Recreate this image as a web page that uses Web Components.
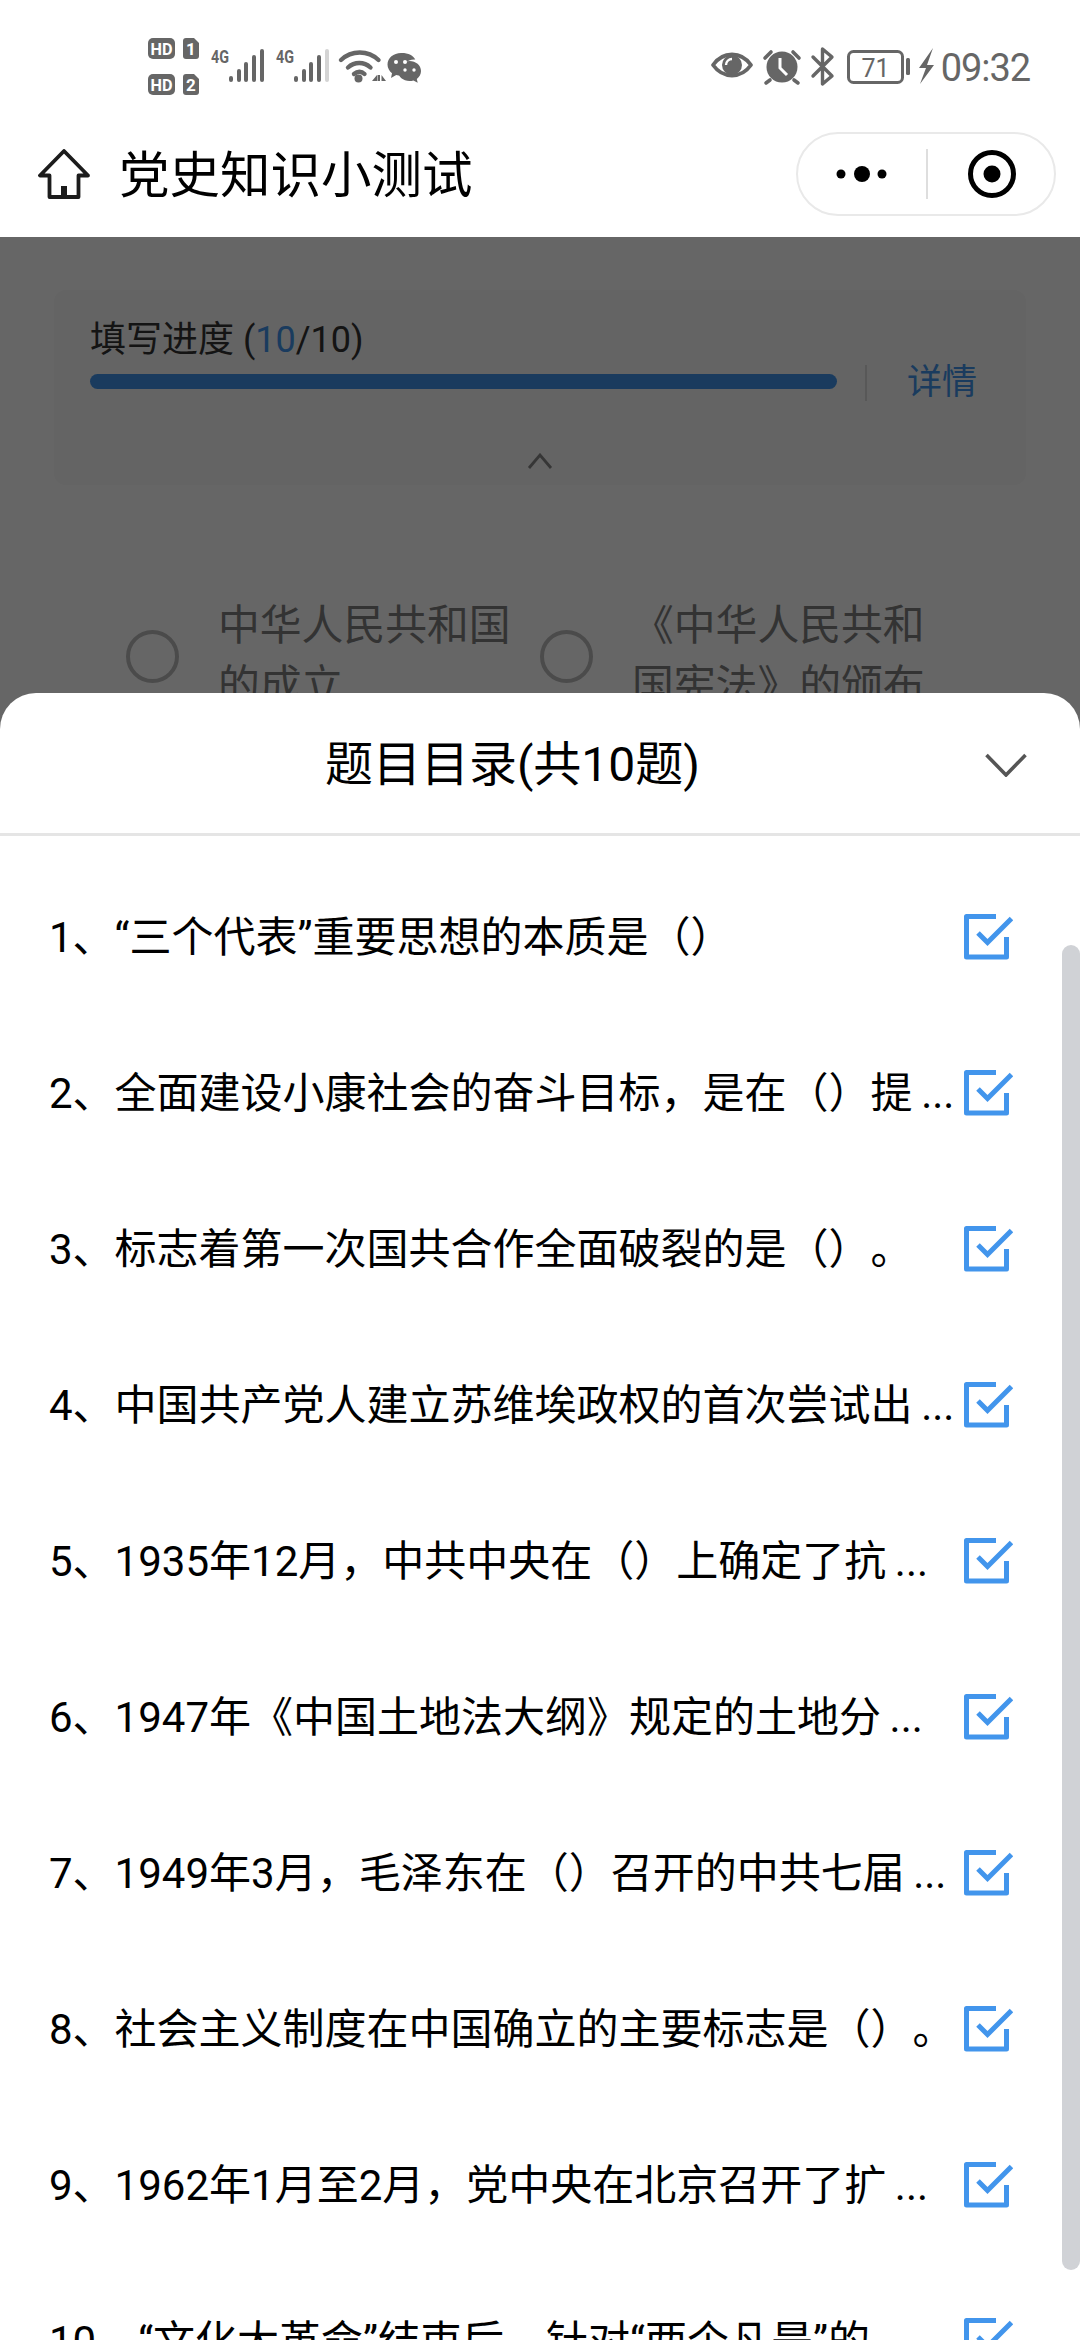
<!DOCTYPE html>
<html lang="zh">
<head>
<meta charset="utf-8">
<title>党史知识小测试</title>
<style>
  html, body { margin: 0; padding: 0; background: #fff; }
  body {
    width: 1080px;
    height: 2340px;
    overflow: hidden;
    position: relative;
    font-family: Roboto, "Noto Sans CJK SC", sans-serif;
    color: #000;
  }
</style>
</head>
<body>
<status-bar></status-bar>
<nav-bar title="党史知识小测试"></nav-bar>
<quiz-body>
  <quiz-progress done="10" total="10"></quiz-progress>
  <quiz-options>
    <quiz-option>中华人民共和国的成立</quiz-option>
    <quiz-option>《中华人民共和国宪法》的颁布</quiz-option>
  </quiz-options>
</quiz-body>
<toc-sheet title="题目目录(共10题)">
  <toc-item>1、“三个代表”重要思想的本质是（）</toc-item>
  <toc-item>2、全面建设小康社会的奋斗目标，是在（）提&#8201;...</toc-item>
  <toc-item>3、标志着第一次国共合作全面破裂的是（）。</toc-item>
  <toc-item>4、中国共产党人建立苏维埃政权的首次尝试出&#8201;...</toc-item>
  <toc-item>5、1935年12月，中共中央在（）上确定了抗&#8201;...</toc-item>
  <toc-item>6、1947年《中国土地法大纲》规定的土地分&#8201;...</toc-item>
  <toc-item>7、1949年3月，毛泽东在（）召开的中共七届&#8201;...</toc-item>
  <toc-item>8、社会主义制度在中国确立的主要标志是（）。</toc-item>
  <toc-item>9、1962年1月至2月，党中央在北京召开了扩&#8201;...</toc-item>
  <toc-item>10、“文化大革命”结束后，针对“两个凡是”的</toc-item>
</toc-sheet>

<script>
const define = (name, html, Base = HTMLElement) => {
  const template = document.createElement('template');
  template.innerHTML = html;
  window.customElements.define(name, class extends Base {
    constructor () {
      super();
      this.attachShadow({ mode: 'open' });
      this.shadowRoot.appendChild(template.content.cloneNode(true));
    }
    connectedCallback () {
      if (this.render) this.render();
    }
  });
};

/* status bar */

const signal = (x, last) => `
  <text x="${x}" y="63" font-size="18" font-weight="700" textLength="18" lengthAdjust="spacingAndGlyphs">4G</text>
  <g>
    <rect x="${x + 18}" y="76" width="4" height="6" rx="2"/>
    <rect x="${x + 26}" y="69" width="4" height="13" rx="2"/>
    <rect x="${x + 33}" y="62" width="4" height="20" rx="2"/>
    <rect x="${x + 41}" y="55" width="4" height="27" rx="2"/>
    <rect x="${x + 49}" y="49" width="4" height="33" rx="2" fill="${last}"/>
  </g>`;

define('status-bar', `
  <style>
    :host {
      display: flex;
      justify-content: space-between;
      align-items: flex-start;
      height: 110px;
      color: #666;
      font-family: Roboto, sans-serif;
    }
    svg { display: block; fill: #666; }
    .left { margin-top: 30px; margin-left: 140px; }
    .right { display: flex; align-items: center; margin-top: 40px; margin-right: 50px; }
    .time { font-size: 38px; letter-spacing: -1.100px; line-height: 50px; margin-left: 1px; position: relative; top: 3px; }
  </style>
  <svg class="left" width="290" height="70" viewBox="140 30 290 70">
    <rect x="148" y="38" width="27" height="21" rx="5"/>
    <path d="M186 38h8l5 5v13a3 3 0 0 1-3 3h-10a3 3 0 0 1-3-3v-15a3 3 0 0 1 3-3z"/>
    <rect x="148" y="74" width="27" height="21" rx="5"/>
    <path d="M186 74h8l5 5v13a3 3 0 0 1-3 3h-10a3 3 0 0 1-3-3v-15a3 3 0 0 1 3-3z"/>
    <g fill="#fff" font-size="17" font-weight="700" text-anchor="middle">
      <text x="161.5" y="54.5" textLength="22" lengthAdjust="spacingAndGlyphs">HD</text>
      <text x="191" y="54.5">1</text>
      <text x="161.5" y="90.5" textLength="22" lengthAdjust="spacingAndGlyphs">HD</text>
      <text x="191" y="90.5">2</text>
    </g>
    ${signal(211, '#666')}
    ${signal(276, '#d4d4d4')}
    <g fill="none" stroke="#666" stroke-width="4.4" stroke-linecap="round">
      <path d="M341 60c10.500-10 27-10 37.500 0"/>
      <path d="M348 67.500c6.500-6 16-6 22.500 0"/>
      <path d="M354 74c3.500-3 7.500-3 10.500 0"/>
    </g>
    <circle cx="358.500" cy="78.500" r="4"/>
    <path d="M372 81l5-6v6zM380 75v6h-2.500v-6zM381.500 75l4.500 6h-4.500z"/>
    <path d="M401 53c-7.500 0-13.500 5-13.500 11.500 0 3.500 1.800 6.500 4.500 8.700l-1 4.800 5.200-3c1.500.4 3 .6 4.800.6.400 0 .9 0 1.300 0-.6-1.500-.9-3-.9-4.600 0-6.500 5.700-11.500 12.800-11.500h1.100c-1.800-3.800-6.800-6.500-13.800-6.500z"/>
    <path d="M421 71c0-5.700-5.200-10-11.500-10s-11.500 4.300-11.500 10 5.200 10 11.500 10c1.400 0 2.700-.2 3.900-.6l4.300 2.400-.9-3.900c2.600-1.900 4.200-4.700 4.200-7.900z"/>
    <g fill="#fff">
      <circle cx="396" cy="62" r="2"/><circle cx="405" cy="62" r="2"/>
      <circle cx="405" cy="70" r="1.700"/><circle cx="414" cy="70" r="1.700"/>
    </g>
  </svg>
  <div class="right">
    <svg width="238" height="50" viewBox="700 40 238 50">
      <path d="M711 65c5-7 11.500-10.500 19-10.500S744 58 749 65c-5 7-11.500 10.500-19 10.500S716 72 711 65z" fill="none" stroke="#666" stroke-width="3.800" stroke-linejoin="round"/>
      <circle cx="730" cy="65" r="10"/>
      <path d="M724 65a6 6 0 0 1 6-6" fill="none" stroke="#fff" stroke-width="2.400"/>
      <circle cx="780" cy="67" r="15.500"/>
      <path d="M778 58v10l7 7" fill="none" stroke="#fff" stroke-width="3"/>
      <path d="M763 58l6-6M797 58l-6-6M768 80l-4 3M792 80l4 3" stroke="#666" stroke-width="3.600" stroke-linecap="round"/>
      <path d="M811 57l19 19-9.500 8V49l9.500 8-19 19" fill="none" stroke="#666" stroke-width="3.400" stroke-linejoin="round" stroke-linecap="round"/>
      <rect x="846.500" y="51.500" width="54" height="31" rx="5" fill="none" stroke="#666" stroke-width="3"/>
      <text x="873.500" y="77" text-anchor="middle" font-size="25" fill="#666">71</text>
      <rect x="904" y="58" width="4" height="17" rx="1.500"/>
      <path d="M931 48L917 68h7l-6 16 14-19h-7z"/>
    </svg>
    <span class="time">09:32</span>
  </div>
`);

/* nav bar */

class NavBarBase extends HTMLElement {
  render () {
    this.shadowRoot.querySelector('.title').textContent = this.getAttribute('title');
  }
}

define('nav-bar', `
  <style>
    :host {
      display: flex;
      align-items: center;
      height: 127px;
      padding: 0 24px 0 38px;
      box-sizing: border-box;
      background: #fff;
    }
    .home { display: block; flex: none; }
    .title {
      flex: 1;
      margin-left: 29px;
      font-size: 50.500px;
      line-height: 60px;
      white-space: nowrap;
      font-family: "Noto Sans CJK SC", sans-serif;
      position: relative;
      top: -3px;
    }
    .capsule {
      flex: none;
      display: flex;
      align-items: center;
      width: 260px;
      height: 84px;
      box-sizing: border-box;
      margin-top: 1px;
      border: 2px solid #e9e9e9;
      border-radius: 42px;
    }
    .cell { flex: none; display: flex; align-items: center; justify-content: center; }
    .more { width: 128px; height: 50px; border-right: 2px solid #dedede; box-sizing: content-box; }
    .target { flex: 1; padding-left: 2px; }
    svg { display: block; }
  </style>
  <svg class="home" width="52" height="50" viewBox="0 0 52 50">
    <path d="M26 2L2 26.500h9.500V48h29V26.500H50z" fill="none" stroke="#1c1c1c" stroke-width="3.800" stroke-linejoin="round"/>
    <rect x="23" y="37" width="6" height="11" fill="#1c1c1c"/>
  </svg>
  <div class="title"></div>
  <div class="capsule">
    <div class="cell more">
      <svg width="64" height="20" viewBox="0 0 64 20">
        <circle cx="11" cy="10" r="4.500"/><circle cx="32" cy="10" r="8"/><circle cx="52" cy="10" r="4.500"/>
      </svg>
    </div>
    <div class="cell target">
      <svg width="50" height="50" viewBox="0 0 50 50">
        <circle cx="25" cy="25" r="21.500" fill="none" stroke="#000" stroke-width="5"/>
        <circle cx="25" cy="25" r="8.500"/>
      </svg>
    </div>
  </div>
`, NavBarBase);

/* dimmed page behind the sheet */

define('quiz-body', `
  <style>
    :host {
      display: block;
      position: relative;
      height: 2103px;
      padding: 53px 54px 0;
      box-sizing: border-box;
      background: #fff;
      color: #333;
      font-family: Roboto, "Noto Sans CJK SC", sans-serif;
    }
    .dim { position: absolute; inset: 0; background: rgba(0, 0, 0, 0.6); }
  </style>
  <slot></slot>
  <div class="dim"></div>
`);

class QuizProgressBase extends HTMLElement {
  render () {
    this.shadowRoot.querySelector('.done').textContent = this.getAttribute('done');
    this.shadowRoot.querySelector('.total').textContent = this.getAttribute('total');
  }
}

define('quiz-progress', `
  <style>
    :host {
      display: block;
      height: 195px;
      padding: 28px 0 0 36px;
      box-sizing: border-box;
      border-radius: 12px;
      background: #f9f9f9;
    }
    .label { font-size: 36px; line-height: 44px; white-space: nowrap; }
    .done { color: #4295ec; }
    .row { display: flex; align-items: center; margin-top: 3px; }
    .track { width: 747px; height: 15px; border-radius: 8px; background: #4295ec; margin-top: -4px; }
    .more {
      margin-left: 28px;
      padding-left: 40px;
      border-left: 2px solid #ddd;
      height: 36px;
      font-size: 35px;
      line-height: 36px;
      color: #4295ec;
      white-space: nowrap;
    }
    .fold { display: flex; justify-content: center; margin: 52px 0 0 -36px; }
    svg { display: block; }
  </style>
  <div class="label">填写进度 (<span class="done"></span>/<span class="total"></span>)</div>
  <div class="row">
    <div class="track"></div>
    <div class="more">详情</div>
  </div>
  <div class="fold">
    <svg width="26" height="16" viewBox="0 0 26 16">
      <path d="M2 15L13 2l11 13" fill="none" stroke="#888" stroke-width="2.800"/>
    </svg>
  </div>
`, QuizProgressBase);

define('quiz-options', `
  <style>
    :host { display: flex; gap: 29px; margin: 111px 0 0 72px; }
  </style>
  <slot></slot>
`);

define('quiz-option', `
  <style>
    :host { display: flex; align-items: center; gap: 39px; width: 385px; flex: none; }
    .radio { flex: none; width: 53px; height: 53px; box-sizing: border-box; border: 4px solid #bbb; border-radius: 50%; }
    .text { flex: none; width: 293px; font-size: 41.800px; line-height: 60px; color: #808080; }
  </style>
  <div class="radio"></div>
  <div class="text"><slot></slot></div>
`);

/* catalogue sheet */

class TocSheetBase extends HTMLElement {
  render () {
    this.shadowRoot.querySelector('.title').textContent = this.getAttribute('title');
  }
}

define('toc-sheet', `
  <style>
    :host {
      display: block;
      position: absolute;
      left: 0;
      right: 0;
      top: 693px;
      bottom: 0;
      overflow: hidden;
      border-radius: 36px 36px 0 0;
      background: #fff;
    }
    header {
      display: flex;
      align-items: center;
      height: 143px;
      box-sizing: border-box;
      padding-right: 53px;
      padding-top: 4px;
      border-bottom: 3px solid #e5e5e5;
    }
    .title { flex: 1; text-align: center; padding-left: 40px; font-size: 48px; line-height: 60px; white-space: nowrap; color: #000; }
    svg { display: block; flex: none; }
    .list { padding-top: 23px; }
    .thumb {
      position: absolute;
      top: 252px;
      right: 0;
      width: 18px;
      height: 1325px;
      border-radius: 9px;
      background: #d0d2d6;
    }
  </style>
  <header>
    <div class="title"></div>
    <svg width="42" height="24" viewBox="0 0 42 24">
      <path d="M1.500 2L21 22 40.500 2" fill="none" stroke="#555" stroke-width="3.600"/>
    </svg>
  </header>
  <div class="list"><slot></slot></div>
  <div class="thumb"></div>
`, TocSheetBase);

define('toc-item', `
  <style>
    :host {
      display: flex;
      align-items: center;
      height: 156px;
      padding-left: 49px;
      box-sizing: border-box;
      font-size: 42px;
      text-spacing-trim: space-all;
    }
    .text {
      width: 905px;
      flex: none;
      white-space: nowrap;
      padding-bottom: 8px;
    }
    svg { display: block; flex: none; margin-left: 7px; }
  </style>
  <div class="text"><slot></slot></div>
  <svg width="52" height="52" viewBox="961 911 52 52">
    <path d="M996 916.500h-29.500v40.500h40v-20" fill="none" stroke="#4295ec" stroke-width="5" stroke-linejoin="round"/>
    <path d="M978 933l9.500 9.500 24-24" fill="none" stroke="#4295ec" stroke-width="5"/>
  </svg>
`);
</script>
</body>
</html>
